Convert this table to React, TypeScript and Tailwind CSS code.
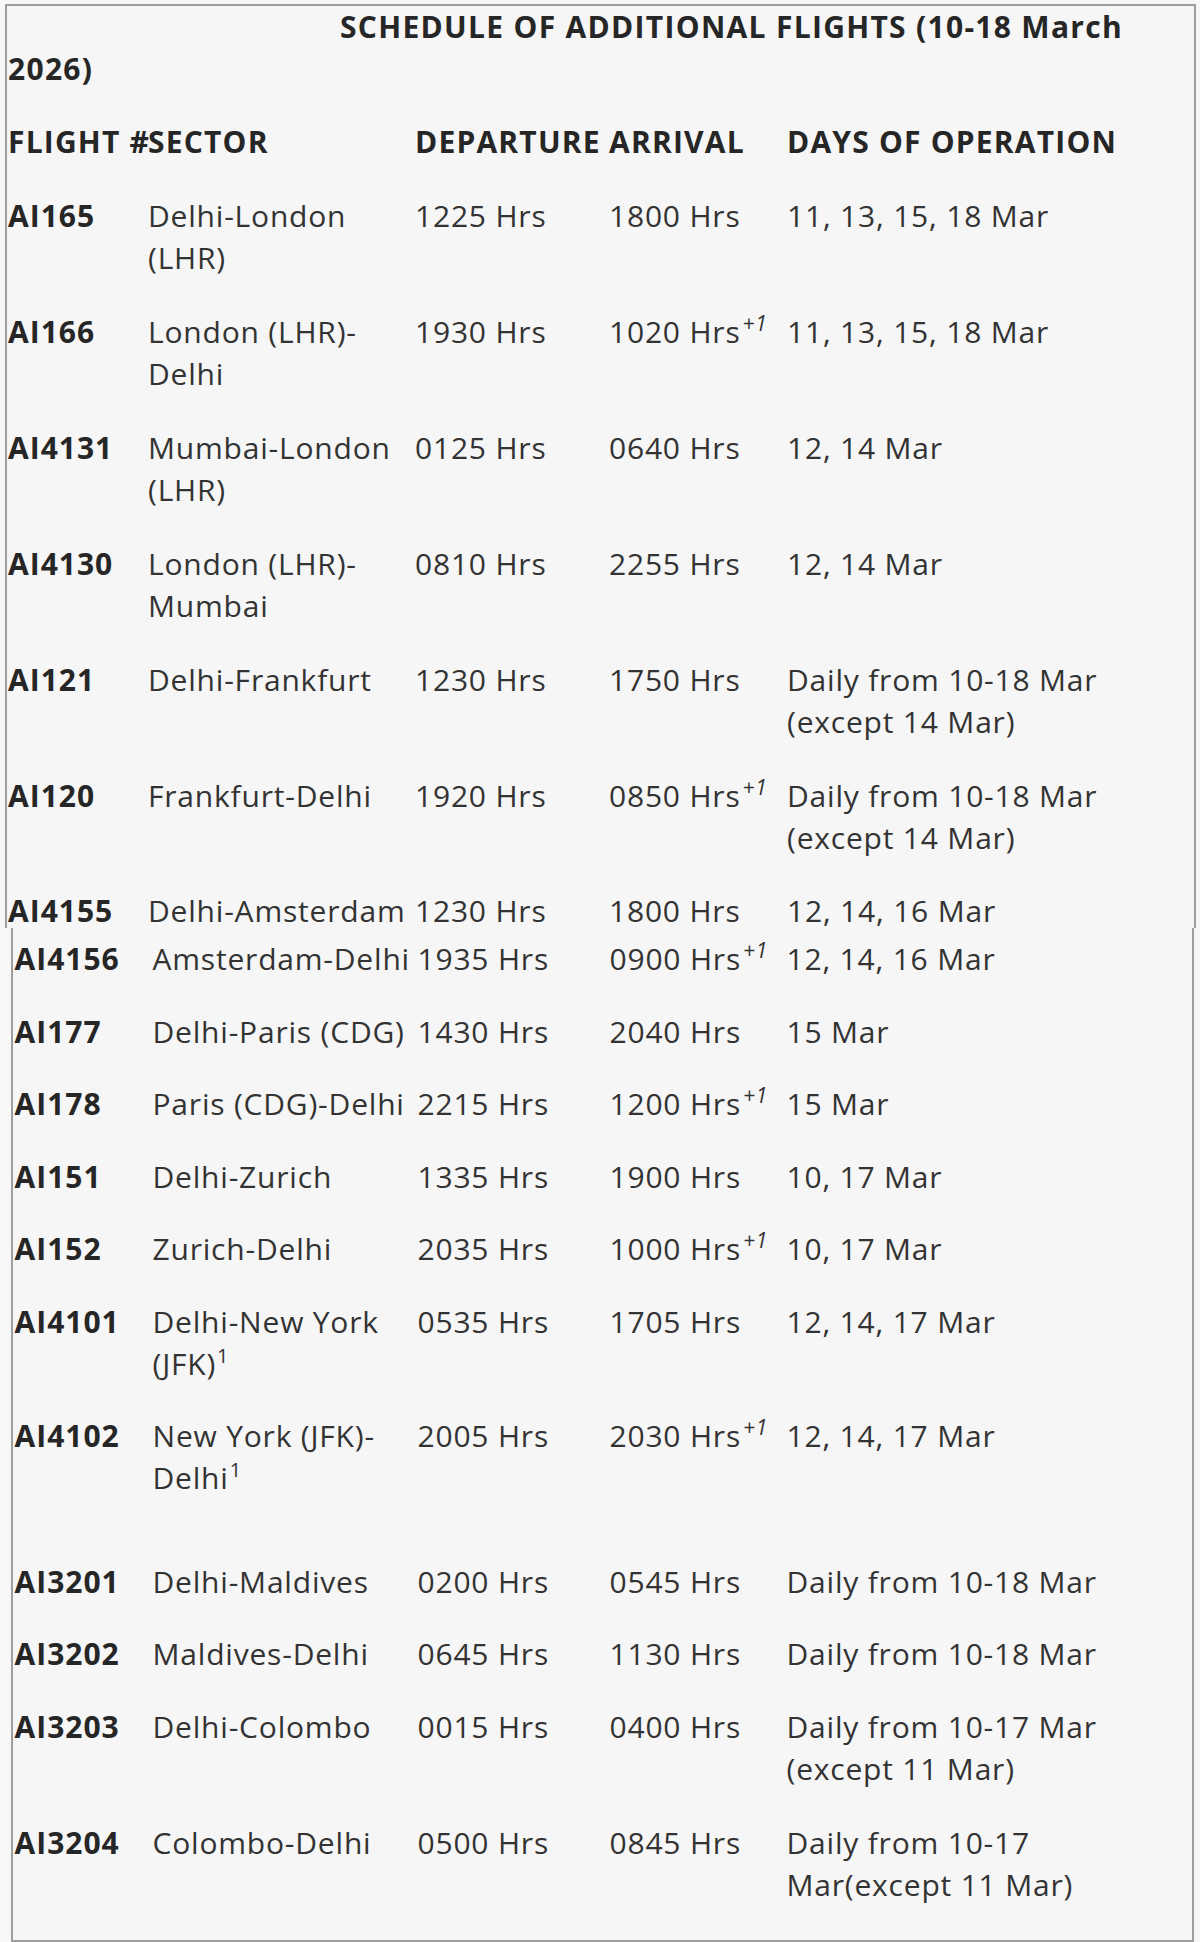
import React from "react";

type Row = {
  f: string;
  s: React.ReactNode;
  d: string;
  a: string;
  plus?: boolean;
  days: React.ReactNode;
  pad: string;
};

const Sup1 = () => <sup className="text-[20px] ml-[1px] top-[-0.6em]">1</sup>;

const ONE = "pt-[15px] pb-[15.5px]";
const TWO = "pt-[15px] pb-[17px]";
const TWO_B = "pt-[15px] pb-[15px]";

const topRows: Row[] = [
  { f: "AI165", s: <>Delhi-London<br />(LHR)</>, d: "1225 Hrs", a: "1800 Hrs", days: "11, 13, 15, 18 Mar", pad: TWO },
  { f: "AI166", s: <>London (LHR)-<br />Delhi</>, d: "1930 Hrs", a: "1020 Hrs", plus: true, days: "11, 13, 15, 18 Mar", pad: TWO },
  { f: "AI4131", s: <>Mumbai-London<br />(LHR)</>, d: "0125 Hrs", a: "0640 Hrs", days: "12, 14 Mar", pad: TWO },
  { f: "AI4130", s: <>London (LHR)-<br />Mumbai</>, d: "0810 Hrs", a: "2255 Hrs", days: "12, 14 Mar", pad: TWO },
  { f: "AI121", s: "Delhi-Frankfurt", d: "1230 Hrs", a: "1750 Hrs", days: <>Daily from 10-18 Mar<br />(except 14 Mar)</>, pad: TWO },
  { f: "AI120", s: "Frankfurt-Delhi", d: "1920 Hrs", a: "0850 Hrs", plus: true, days: <>Daily from 10-18 Mar<br />(except 14 Mar)</>, pad: TWO },
  { f: "AI4155", s: "Delhi-Amsterdam", d: "1230 Hrs", a: "1800 Hrs", days: "12, 14, 16 Mar", pad: "pt-[20px] pb-0 leading-[30px]" },
];

const bottomRows: Row[] = [
  { f: "AI4156", s: "Amsterdam-Delhi", d: "1935 Hrs", a: "0900 Hrs", plus: true, days: "12, 14, 16 Mar", pad: "pt-[10px] pb-[15.5px]" },
  { f: "AI177", s: "Delhi-Paris (CDG)", d: "1430 Hrs", a: "2040 Hrs", days: "15 Mar", pad: ONE },
  { f: "AI178", s: "Paris (CDG)-Delhi", d: "2215 Hrs", a: "1200 Hrs", plus: true, days: "15 Mar", pad: ONE },
  { f: "AI151", s: "Delhi-Zurich", d: "1335 Hrs", a: "1900 Hrs", days: "10, 17 Mar", pad: ONE },
  { f: "AI152", s: "Zurich-Delhi", d: "2035 Hrs", a: "1000 Hrs", plus: true, days: "10, 17 Mar", pad: ONE },
  { f: "AI4101", s: <>Delhi-New York<br />(JFK)<Sup1 /></>, d: "0535 Hrs", a: "1705 Hrs", days: "12, 14, 17 Mar", pad: TWO_B },
  { f: "AI4102", s: <>New York (JFK)-<br />Delhi<Sup1 /></>, d: "2005 Hrs", a: "2030 Hrs", plus: true, days: "12, 14, 17 Mar", pad: "pt-[15px] pb-[47px]" },
  { f: "AI3201", s: "Delhi-Maldives", d: "0200 Hrs", a: "0545 Hrs", days: "Daily from 10-18 Mar", pad: ONE },
  { f: "AI3202", s: "Maldives-Delhi", d: "0645 Hrs", a: "1130 Hrs", days: "Daily from 10-18 Mar", pad: ONE },
  { f: "AI3203", s: "Delhi-Colombo", d: "0015 Hrs", a: "0400 Hrs", days: <>Daily from 10-17 Mar<br />(except 11 Mar)</>, pad: TWO },
  { f: "AI3204", s: "Colombo-Delhi", d: "0500 Hrs", a: "0845 Hrs", days: <>Daily from 10-17<br />Mar(except 11 Mar)</>, pad: TWO_B },
];

function DataRow({ r, cols }: { r: Row; cols: string }) {
  return (
    <div className={`grid ${cols} ${r.pad}`}>
      <div className="font-bold text-[#262626] tracking-[1px] whitespace-nowrap">{r.f}</div>
      <div className="whitespace-nowrap">{r.s}</div>
      <div className="whitespace-nowrap">{r.d}</div>
      <div className="whitespace-nowrap">
        {r.a}
        {r.plus && <sup className="text-[21px] italic ml-[2px] top-[-0.55em]">+1</sup>}
      </div>
      <div className="whitespace-nowrap">{r.days}</div>
    </div>
  );
}

export default function App() {
  const topCols = "grid-cols-[140px_267px_194px_178px_1fr]";
  const botCols = "grid-cols-[138px_265px_192px_177px_1fr]";
  return (
    <div
      className="w-[1200px] h-[1942px] bg-[#f7f7f7] pt-[4px] text-[30px] leading-[42px] text-[#333333] tracking-[0.8px] overflow-hidden"
      style={{ fontFamily: '"Open Sans", "Noto Sans", sans-serif' }}
    >
      {/* top part */}
      <div className="ml-[5px] w-[1191px] h-[924px] border-t-2 border-l-2 border-r-2 border-[#9e9e9e] bg-[#f6f6f6] pl-[1px]">
        <div className="font-bold text-[#262626] tracking-[1.3px] pb-[16px] indent-[332px] whitespace-nowrap">
          SCHEDULE OF ADDITIONAL FLIGHTS (10-18 March
          <br />
          2026)
        </div>
        <div className={`grid ${topCols} pt-[14px] pb-[16px] leading-[44px] font-bold text-[#262626] tracking-[1.2px] whitespace-nowrap`}>
          <div>FLIGHT #</div>
          <div>SECTOR</div>
          <div>DEPARTURE</div>
          <div>ARRIVAL</div>
          <div>DAYS OF OPERATION</div>
        </div>
        {topRows.map((r) => (
          <DataRow key={r.f} r={r} cols={topCols} />
        ))}
      </div>
      {/* bottom part */}
      <div className="ml-[11px] w-[1183px] h-[1014px] border-l-2 border-r-2 border-b-2 border-[#9e9e9e] bg-[#f6f6f6] pl-[1.5px]">
        {bottomRows.map((r) => (
          <DataRow key={r.f} r={r} cols={botCols} />
        ))}
      </div>
    </div>
  );
}
